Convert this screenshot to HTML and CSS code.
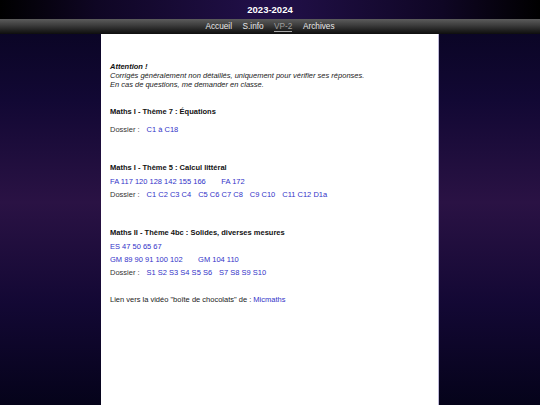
FILE: index.html
```html
<!DOCTYPE html>
<html lang="fr">
<head>
<meta charset="utf-8">
<title>2023-2024</title>
<link rel="stylesheet" href="styles.css">
</head>
<body>
<header class="top">2023-2024</header>
<nav class="nav">
  <a href="#">Accueil</a>
  <a href="#">S.info</a>
  <a href="#" class="current">VP-2</a>
  <a href="#">Archives</a>
</nav>
<main class="page">
  <div class="note">
    <div class="strong">Attention !</div>
    <div>Corrigés généralement non détaillés, uniquement pour vérifier ses réponses.</div>
    <div>En cas de questions, me demander en classe.</div>
  </div>

  <section class="sec sec-first">
    <div class="heading">Maths I - Thème 7 : Équations</div>
    <div class="row row-spaced"><span class="label">Dossier :</span><a href="#">C1 à C18</a></div>
  </section>

  <section class="sec">
    <div class="heading">Maths I - Thème 5 : Calcul littéral</div>
    <div class="row wide"><a href="#">FA 117 120 128 142 155 166</a><a href="#">FA 172</a></div>
    <div class="row"><span class="label">Dossier :</span><a href="#">C1 C2 C3 C4</a><a href="#">C5 C6 C7 C8</a><a href="#">C9 C10</a><a href="#">C11 C12 D1a</a></div>
  </section>

  <section class="sec">
    <div class="heading">Maths II - Thème 4bc : Solides, diverses mesures</div>
    <div class="row"><a href="#">ES 47 50 65 67</a></div>
    <div class="row wide"><a href="#">GM 89 90 91 100 102</a><a href="#">GM 104 110</a></div>
    <div class="row"><span class="label">Dossier :</span><a href="#">S1 S2 S3 S4 S5 S6</a><a href="#">S7 S8 S9 S10</a></div>
  </section>

  <p class="lien">Lien vers la vidéo "boîte de chocolats" de : <a href="#">Micmaths</a></p>
</main>
</body>
</html>
```

FILE: styles.css
```css
html {
  min-height: 100%;
  background: linear-gradient(to bottom, #07041f 0%, #120834 25%, #2a1244 50%, #130834 75%, #05031a 100%);
}

body {
  margin: 0;
  min-height: 405px;
  display: flex;
  flex-direction: column;
  font-family: "Liberation Sans", Arial, sans-serif;
  -webkit-font-smoothing: antialiased;
}

.top {
  height: 19px;
  display: flex;
  align-items: center;
  justify-content: center;
  background: linear-gradient(to right, #000 0%, #0f0624 18%, #22104a 50%, #0f0624 82%, #000 100%);
  color: #fff;
  font-weight: bold;
  font-size: 9.5px;
}

.nav {
  height: 15px;
  display: flex;
  align-items: center;
  justify-content: center;
  gap: 10.5px;
  background: linear-gradient(to bottom, #5c5c5c 0%, #3a3a3a 45%, #1c1c1c 80%, #0e0e0e 100%);
  font-size: 8.25px;
}

.nav a {
  color: #e8e8e8;
  text-decoration: none;
  line-height: 9px;
}

.nav a.current {
  color: #9c9c9c;
  border-bottom: 1px solid #a8a8a8;
}

.page {
  flex: 1;
  width: 338px;
  box-sizing: border-box;
  margin: 0 auto;
  padding: 28px 8px 20px 9px;
  background: #fff;
  border-right: 1px solid #bdb8d6;
  font-size: 7.5px;
  color: #222;
}

.note {
  font-style: italic;
  line-height: 9px;
  color: #222;
}

.note .strong {
  font-weight: bold;
  color: #111;
}

.sec {
  margin-top: 27px;
}

.sec-first {
  margin-top: 18px;
}

.heading {
  font-weight: bold;
  line-height: 9px;
  color: #111;
}

.row {
  display: flex;
  column-gap: 7px;
  line-height: 13px;
  margin-top: 3px;
  white-space: pre;
}

.row + .row {
  margin-top: 0;
}

.row-spaced {
  margin-top: 7px;
}

.row.wide {
  column-gap: 15.5px;
}

.label {
  color: #333;
}

a {
  color: #3232c8;
  text-decoration: none;
}

.lien {
  margin: 16px 0 0;
  line-height: 9px;
  color: #222;
}
```
